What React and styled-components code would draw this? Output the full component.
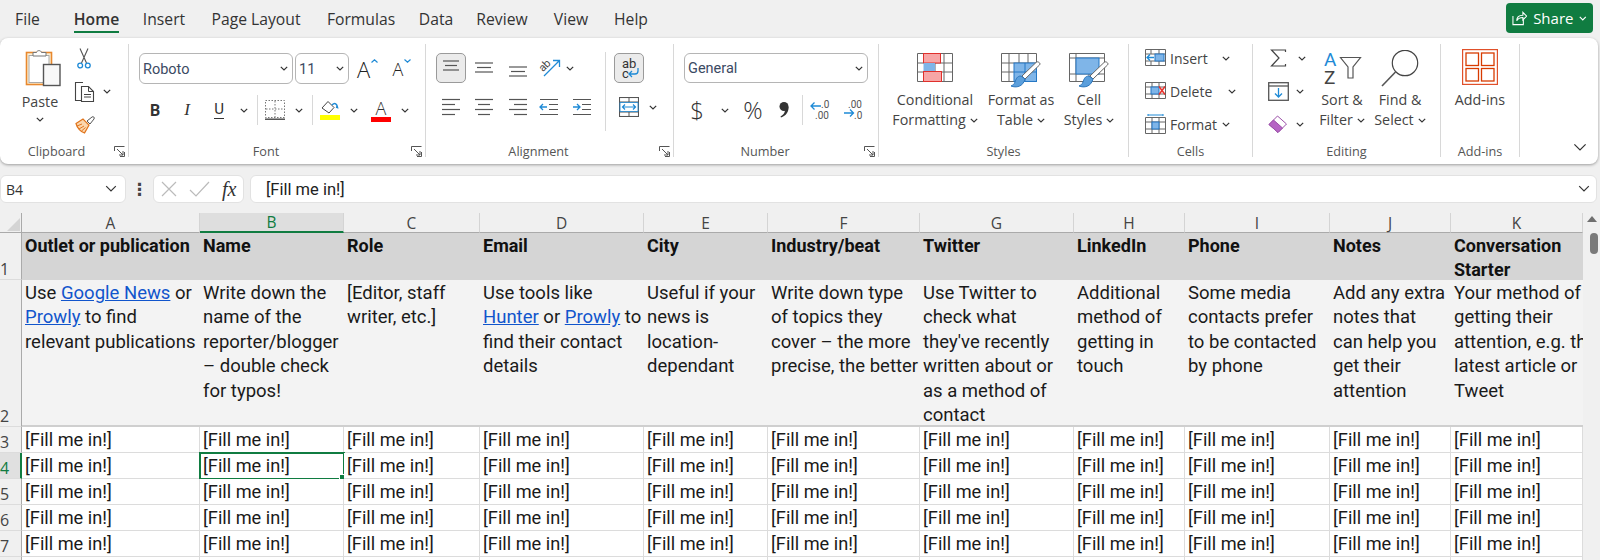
import React from 'react'
import styled, { createGlobalStyle } from 'styled-components'

const GlobalStyle = createGlobalStyle`
  html, body { margin: 0; padding: 0; background: #f0f0f0; overflow: hidden; }
  #root { width: 1600px; height: 560px; overflow: hidden; }
`

const UI = '"Open Sans", "Noto Sans", sans-serif'
const GREEN = '#107c41'
const INK = '#444'
const BLUE = '#1e8ad6'

const Link = styled.span`
  color: #1155cc;
  text-decoration: underline;
`

function Chev({ w = 8, color = '#333', sw = 1.2 }) {
  return (
    <svg width={w} height={w * 0.625} viewBox="0 0 8 5" fill="none">
      <path d="M.8.8 4 4 7.2.8" stroke={color} strokeWidth={sw} />
    </svg>
  )
}

function Launcher() {
  return (
    <LauncherBox width="11" height="11" viewBox="0 0 11 11" fill="none" stroke="#555">
      <path d="M.5 5V.5h10M10.5 6v4.5H6" />
      <path d="M3 3l6 6M5 9h4V5" />
    </LauncherBox>
  )
}

function PasteIcon() {
  return (
    <svg width="36" height="39" viewBox="0 0 36 39" fill="none">
      <rect x="1.5" y="4.5" width="25" height="32" fill="#fdf1d6" stroke="#e8882e" strokeWidth="1.6" />
      <rect x="4" y="7.5" width="20" height="27" fill="#fff" stroke="#aaa" />
      <path d="M8 8V4.5h3.5C12 2 16 2 16.5 4.5H21V8z" fill="#fff" stroke="#777" />
      <rect x="18.5" y="16.5" width="16.5" height="21" fill="#f8f8f8" stroke="#555" strokeWidth="1.4" />
    </svg>
  )
}

function CutIcon() {
  return (
    <svg width="14" height="21" viewBox="0 0 14 21" fill="none">
      <path d="M3 .5 9.5 15M11 .5 4.5 15" stroke="#555" strokeWidth="1.1" />
      <circle cx="3.2" cy="17.5" r="2.4" stroke={BLUE} strokeWidth="1.3" />
      <circle cx="10.8" cy="17.5" r="2.4" stroke={BLUE} strokeWidth="1.3" />
    </svg>
  )
}

function CopyIcon() {
  return (
    <svg width="21" height="21" viewBox="0 0 21 21" fill="none" stroke="#444">
      <path d="M8 19.5H1.5V1.5H9" strokeWidth="1.1" />
      <path d="M7.5 5.5h7l5 5v10h-12z" fill="#fff" strokeWidth="1.1" />
      <path d="M14.5 5.5v5h5M10 13.5h7M10 16h7" />
    </svg>
  )
}

function PainterIcon() {
  return (
    <svg width="21" height="20" viewBox="0 0 21 20" fill="none">
      <path d="M13 7l3 3 4-5c1-1.5-.8-3-2-2z" fill="#fff" stroke="#555" />
      <path d="M2 9.5 9 5l6 6-4.5 8C7 18 3 14 2 9.5z" fill="#fbd6ad" stroke="#e0741c" strokeWidth="1.2" />
      <path d="M3 12l5-2M5 15l5-3M7.5 17l4-3.5" stroke="#e0741c" />
    </svg>
  )
}

function BorderIcon() {
  return (
    <svg width="20" height="20" viewBox="0 0 20 20" fill="none" stroke="#777" strokeDasharray="1.5 1.5">
      <rect x=".5" y=".5" width="19" height="17" />
      <path d="M10 1v16M1 9h18" />
      <path d="M0 19.2h20" stroke="#444" strokeWidth="1.4" strokeDasharray="none" />
    </svg>
  )
}

function FillIcon() {
  return (
    <svg width="20" height="20" viewBox="0 0 20 20" fill="none">
      <path d="M2 8 8 1.5l6 6-5 5.5z" fill="#fff" stroke="#444" />
      <path d="M12 5c3-3 5-1 5.5 2.5L16 7" stroke={BLUE} strokeWidth="1.6" />
      <rect y="15" width="20" height="5" fill="#ffff00" />
    </svg>
  )
}

function FontColorIcon() {
  return (
    <ColorWrap>
      <ColorA>A</ColorA>
      <ColorBar />
    </ColorWrap>
  )
}

function AlignLines({ rows }) {
  return (
    <svg width="20" height="20" viewBox="0 0 20 20" fill="none" stroke="#555" strokeWidth="1.2">
      {rows.map((r, i) => (
        <path key={i} d={`M${r[0]} ${r[2]}H${r[1]}`} />
      ))}
    </svg>
  )
}

const TOP_ROWS = [[2, 18, 3], [4, 16, 7.5], [2, 18, 12]]
const MID_ROWS = [[1, 19, 5], [3, 17, 9.5], [1, 19, 14]]
const BOT_ROWS = [[1, 19, 9], [3, 17, 13.5], [1, 19, 18]]
const LEFT_ROWS = [[1, 19, 2.5], [1, 14, 7.5], [1, 19, 12.5], [1, 14, 17.5]]
const CENTER_ROWS = [[1, 19, 2.5], [4, 16, 7.5], [1, 19, 12.5], [4, 16, 17.5]]
const RIGHT_ROWS = [[1, 19, 2.5], [6, 19, 7.5], [1, 19, 12.5], [6, 19, 17.5]]

function OrientIcon() {
  return (
    <svg width="22" height="20" viewBox="0 0 22 20" fill="none" overflow="visible">
      <text x="0" y="11" fontFamily="Roboto" fontSize="11" fill="#444" transform="rotate(-45 6 8)">ab</text>
      <path d="M5 18 20 3M14 2.5h6.5V9" stroke={BLUE} strokeWidth="1.3" />
    </svg>
  )
}

function IndentIcon({ flip }) {
  return (
    <svg width="20" height="20" viewBox="0 0 20 20" fill="none">
      <path d="M1 2.5h18M10 7.5h9M10 12.5h9M1 17.5h18" stroke="#555" strokeWidth="1.2" />
      {flip
        ? <path d="M1 10h7M5 7l3 3-3 3" stroke={BLUE} strokeWidth="1.3" />
        : <path d="M8 10H1M4 7l-3 3 3 3" stroke={BLUE} strokeWidth="1.3" />}
    </svg>
  )
}

function WrapIcon() {
  return (
    <svg width="22" height="24" viewBox="0 0 22 24" fill="none">
      <text x="4" y="12" fontFamily="Roboto" fontSize="13" fill="#333">ab</text>
      <text x="4" y="22" fontFamily="Roboto" fontSize="13" fill="#333">c</text>
      <path d="M20 12v3c0 2-1 3-3 3h-6M14 15l-3 3 3 3" stroke={BLUE} strokeWidth="1.3" />
    </svg>
  )
}

function MergeIcon() {
  return (
    <svg width="20" height="20" viewBox="0 0 20 20" fill="none" stroke="#555">
      <rect x=".5" y=".5" width="19" height="19" strokeWidth="1.1" />
      <path d="M10 1v4M10 15v4M1 5h18M1 15h18" />
      <path d="M3 10h14M6 7.5 3.5 10 6 12.5M14 7.5l2.5 2.5-2.5 2.5" stroke={BLUE} strokeWidth="1.2" />
      <path d="M1 5.5h18v9H1z" stroke={BLUE} strokeWidth=".8" />
    </svg>
  )
}

function DecimalIcon({ more }) {
  return (
    <svg width="21" height="22" viewBox="0 0 21 22" fill="none">
      {more ? (
        <>
          <text x="5" y="9" fontFamily="Roboto" fontSize="10" fill="#555">.00</text>
          <text x="11" y="20" fontFamily="Roboto" fontSize="10" fill="#555">.0</text>
          <path d="M10 14H1M7 10.5l3.5 3.5L7 17.5" stroke={BLUE} strokeWidth="1.3" />
        </>
      ) : (
        <>
          <text x="11" y="9" fontFamily="Roboto" fontSize="10" fill="#555">.0</text>
          <text x="5" y="20" fontFamily="Roboto" fontSize="10" fill="#555">.00</text>
          <path d="M1 7h10M4.5 3.5 1 7l3.5 3.5" stroke={BLUE} strokeWidth="1.3" />
        </>
      )}
    </svg>
  )
}

function CommaStyleIcon() {
  return (
    <svg width="11" height="16" viewBox="0 0 11 16" fill="#333">
      <circle cx="5" cy="4.5" r="4.5" />
      <path d="M9.5 4.5c.6 5-2.5 9.5-7.5 11l-.5-1c2.500-1.300 4.300-3.500 4.500-6z" />
    </svg>
  )
}

function SheetGrid() {
  return (
    <path
      d="M.5.5h35v28H.5zM.5 10h35M.5 19h35M8 .5v28M18 .5v28M27 .5v28"
      stroke="#666"
      strokeWidth="1"
      fill="#fff"
    />
  )
}

function ConditionalIcon() {
  return (
    <svg width="36" height="29" viewBox="0 0 36 29" fill="none">
      <SheetGrid />
      <rect x="6.5" y=".5" width="17" height="9.5" fill="#f7a6a6" stroke="#e0302c" />
      <rect x="6.5" y="10" width="11.5" height="8.5" fill="#7fb5e8" />
      <rect x="6.5" y="18.5" width="18" height="10" fill="#f7a6a6" stroke="#e0302c" />
    </svg>
  )
}

function Brush() {
  return (
    <>
      <path d="M38 9.5c-1-1-2-.8-3 0L21 23l3 3L38.5 12c.8-1 .5-2-.5-2.5z" fill="#fff" stroke="#666" />
      <path d="M20 23c-4 0-5 3-6 6-.5 2-2 3-4 4 5 2 12 1 14-7z" fill="#5b9fdc" stroke="#2f78bd" />
    </>
  )
}

function FormatTableIcon() {
  return (
    <svg width="40" height="35" viewBox="0 0 40 35" fill="none">
      <SheetGrid />
      <rect x="13" y="10" width="22.5" height="18.5" fill="#7fb5e8" stroke="#2577c4" />
      <path d="M13 19h22.5M24 10v18.5" stroke="#2577c4" />
      <Brush />
    </svg>
  )
}

function CellStylesIcon() {
  return (
    <svg width="40" height="35" viewBox="0 0 40 35" fill="none">
      <path d="M.5.5h35v28H.5zM.5 5h35M7 .5v28M.5 21h35M20 21v7.5" stroke="#666" fill="#fff" />
      <rect x="7" y="5" width="23" height="16" fill="#7fb5e8" stroke="#2577c4" />
      <Brush />
    </svg>
  )
}

function InsertCellsIcon() {
  return (
    <svg width="21" height="18" viewBox="0 0 21 18" fill="none">
      <path d="M.5.5h20v16H.5zM.5 5h20M.5 12h20M6 .5V5M6 12v5M14 .5v16" stroke="#666" />
      <rect x="10" y="5" width="9" height="7" fill="#7fb5e8" stroke="#2577c4" />
      <path d="M9 8.5H2M5 5.5 2 8.5l3 3" stroke={BLUE} strokeWidth="1.3" />
    </svg>
  )
}

function DeleteCellsIcon() {
  return (
    <svg width="21" height="18" viewBox="0 0 21 18" fill="none">
      <path d="M.5.5h20v16H.5zM.5 5h20M.5 12h20M7 .5v16M14 .5V5M14 12v5" stroke="#666" />
      <rect x="6" y="5" width="8" height="7" fill="#7fb5e8" stroke="#2577c4" />
      <path d="M14 4.5l6 8M20 4.5l-6 8" stroke="#e8322c" strokeWidth="1.5" />
    </svg>
  )
}

function FormatCellsIcon() {
  return (
    <svg width="21" height="20" viewBox="0 0 21 20" fill="none">
      <path d="M.5 3.5h20v16H.5zM.5 8h20M.5 15h20M7 3.5v16M14 3.5v16" stroke="#666" />
      <rect x="7" y="8" width="7" height="7" fill="#7fb5e8" stroke="#2577c4" />
      <path d="M3 1h15M3 0v2M18 0v2" stroke={BLUE} strokeWidth="1" />
    </svg>
  )
}

function SumIcon() {
  return (
    <svg width="17" height="18" viewBox="0 0 17 18" fill="none">
      <path d="M15.5 3V1H1.5L9 9l-7.5 8h14v-2" stroke="#444" strokeWidth="1.2" />
    </svg>
  )
}

function FillDownIcon() {
  return (
    <svg width="21" height="19" viewBox="0 0 21 19" fill="none">
      <rect x=".7" y=".7" width="19.6" height="17.6" stroke="#555" strokeWidth="1.3" />
      <path d="M.7 4h19.6" stroke="#555" strokeWidth="1.3" />
      <path d="M10.5 6v9M7 11.5l3.5 3.5 3.5-3.5" stroke={BLUE} strokeWidth="1.3" />
    </svg>
  )
}

function ClearIcon() {
  return (
    <svg width="20" height="20" viewBox="0 0 20 20" fill="none">
      <path d="M1 10.5 9.5 2l9 8-8.5 8.5z" fill="#fff" stroke="#9b4fa8" />
      <path d="M1 10.5 5.5 6l9 8L10 18.5z" fill="#b565c4" stroke="#9b4fa8" />
    </svg>
  )
}

function SortIcon() {
  return (
    <svg width="42" height="35" viewBox="0 0 42 35" fill="none" overflow="visible">
      <text x="3" y="16" fontFamily="Roboto" fontSize="19" fill={BLUE}>A</text>
      <text x="3" y="33.5" fontFamily="Roboto" fontSize="19" fill="#444">Z</text>
      <path d="M19.5 7.5h20l-7.5 9.5V28h-5V17z" fill="#fff" stroke="#555" strokeWidth="1.2" />
    </svg>
  )
}

function FindIcon() {
  return (
    <svg width="38" height="37" viewBox="0 0 38 37" fill="none">
      <circle cx="24" cy="13" r="12.7" fill="#fff" stroke="#444" strokeWidth="1.2" />
      <path d="M14.5 22 1 36" stroke="#555" strokeWidth="1.6" />
    </svg>
  )
}

function AddInsIcon() {
  return (
    <svg width="36" height="36" viewBox="0 0 36 36" fill="none">
      <rect x=".6" y=".6" width="34.8" height="34.8" stroke="#e0502a" strokeWidth="1.2" />
      <rect x="4" y="4" width="12.5" height="12.5" stroke="#d83b01" strokeWidth="1.3" />
      <rect x="19.5" y="4" width="12.5" height="12.5" stroke="#d83b01" strokeWidth="1.3" />
      <rect x="4" y="19.5" width="12.5" height="12.5" stroke="#d83b01" strokeWidth="1.3" />
      <rect x="19.5" y="19.5" width="12.5" height="12.5" stroke="#d83b01" strokeWidth="1.3" />
    </svg>
  )
}

function ShareIcon() {
  return (
    <svg width="16" height="16" viewBox="0 0 16 16" fill="none" stroke="#fff" strokeWidth="1.1">
      <path d="M1 6v9h11V9.5" />
      <path d="M5 11c0-4 2.5-6 6.5-6V2L15.5 6l-4 4V7.5C8 7.5 6 9 5 11z" />
    </svg>
  )
}

function SizeCaret({ up }) {
  return (
    <svg width="7" height="4" viewBox="0 0 7 4" fill="none" stroke={BLUE} strokeWidth="1.2">
      <path d={up ? 'M.5 3.5 3.5.8l3 2.7' : 'M.5.5l3 2.7 3-2.7'} />
    </svg>
  )
}

const TABS = ['File', 'Home', 'Insert', 'Page Layout', 'Formulas', 'Data', 'Review', 'View', 'Help']
const TAB_WIDTHS = [55, 83, 52, 132, 78, 72, 60, 78, 42]

const COLS = [
  { id: 'A', w: 178 }, { id: 'B', w: 144 }, { id: 'C', w: 136 }, { id: 'D', w: 164 },
  { id: 'E', w: 124 }, { id: 'F', w: 152 }, { id: 'G', w: 154 }, { id: 'H', w: 111 },
  { id: 'I', w: 145 }, { id: 'J', w: 121 }, { id: 'K', w: 132 },
]

const HEADERS = [
  ['Outlet or publication'], ['Name'], ['Role'], ['Email'], ['City'], ['Industry/beat'],
  ['Twitter'], ['LinkedIn'], ['Phone'], ['Notes'], ['Conversation', 'Starter'],
]

const DESCRIPTIONS = [
  [<>Use <Link>Google News</Link> or</>, <><Link>Prowly</Link> to find</>, 'relevant publications'],
  ['Write down the', 'name of the', 'reporter/blogger', '– double check', 'for typos!'],
  ['[Editor, staff', 'writer, etc.]'],
  ['Use tools like', <><Link>Hunter</Link> or <Link>Prowly</Link> to</>, 'find their contact', 'details'],
  ['Useful if your', 'news is', 'location-', 'dependant'],
  ['Write down type', 'of topics they', 'cover – the more', 'precise, the better'],
  ['Use Twitter to', 'check what', "they've recently", 'written about or', 'as a method of', 'contact'],
  ['Additional', 'method of', 'getting in', 'touch'],
  ['Some media', 'contacts prefer', 'to be contacted', 'by phone'],
  ['Add any extra', 'notes that', 'can help you', 'get their', 'attention'],
  ['Your method of', 'getting their', 'attention, e.g. the', 'latest article or', 'Tweet'],
]

const FILL_ROWS = [3, 4, 5, 6, 7]

function Lines({ lines }) {
  return lines.map((line, i) => <Line key={i}>{line}</Line>)
}

export default function App() {
  return (
    <Page>
      <GlobalStyle />
      <TabBar>
        {TABS.map((t, i) => (
          <Tab key={t} $w={TAB_WIDTHS[i]} $active={t === 'Home'}><span>{t}</span></Tab>
        ))}
        <ShareButton><ShareIcon />Share<Chev color="#fff" /></ShareButton>
      </TabBar>

      <Ribbon>
        <Group $w={129}>
          <GroupBody>
            <PasteTool>
              <PasteGlyph><PasteIcon /></PasteGlyph>
              <PasteLabel>Paste</PasteLabel>
              <Chev />
            </PasteTool>
            <Stack>
              <StackRow><Slot $w={28}><CutIcon /></Slot></StackRow>
              <StackRow><Slot $w={28}><CopyIcon /></Slot><Slot $w={18}><Chev /></Slot></StackRow>
              <StackRow><Slot $w={28}><PainterIcon /></Slot></StackRow>
            </Stack>
          </GroupBody>
          <GroupFoot><GroupLabel $shift={7}>Clipboard</GroupLabel><Launcher /></GroupFoot>
        </Group>

        <Group $w={297}>
          <GroupColumn $pad={10}>
            <ToolRow>
              <Select $w={154}>
                <SelectText>Roboto</SelectText><Chev />
              </Select>
              <Select $w={54} $gap={2}>
                <SelectText>11</SelectText><Chev />
              </Select>
              <Slot $w={37}><GrowA $size={22}>A<SizeCaret up /></GrowA></Slot>
              <Slot $w={32}><GrowA $size={18}>A<SizeCaret /></GrowA></Slot>
            </ToolRow>
            <ToolRow $top={11}>
              <Slot $w={32}><Bold>B</Bold></Slot>
              <Slot $w={32}><Italic>I</Italic></Slot>
              <Slot $w={32}><Under>U</Under></Slot>
              <Slot $w={18}><Chev /></Slot>
              <ToolSep $left={4} />
              <Slot $w={34}><BorderIcon /></Slot>
              <Slot $w={14}><Chev /></Slot>
              <ToolSep $left={6} />
              <Slot $w={34}><FillIcon /></Slot>
              <Slot $w={14}><Chev /></Slot>
              <Slot $w={40}><FontColorIcon /></Slot>
              <Slot $w={8}><Chev /></Slot>
            </ToolRow>
          </GroupColumn>
          <GroupFoot><GroupLabel>Font</GroupLabel><Launcher /></GroupFoot>
        </Group>

        <Group $w={248}>
          <GroupBody>
            <GroupColumn $pad={10} $w={179}>
              <ToolRow>
                <ToggleButton><AlignLines rows={TOP_ROWS} /></ToggleButton>
                <Slot $w={35} $h={30}><AlignLines rows={MID_ROWS} /></Slot>
                <Slot $w={33} $h={30}><AlignLines rows={BOT_ROWS} /></Slot>
                <Slot $w={32} $h={30}><OrientIcon /></Slot>
                <Slot $w={8} $h={30}><Chev /></Slot>
              </ToolRow>
              <ToolRow $top={12}>
                <Slot $w={30}><AlignLines rows={LEFT_ROWS} /></Slot>
                <Slot $w={35}><AlignLines rows={CENTER_ROWS} /></Slot>
                <Slot $w={33}><AlignLines rows={RIGHT_ROWS} /></Slot>
                <Slot $w={30}><IndentIcon /></Slot>
                <Slot $w={36}><IndentIcon flip /></Slot>
              </ToolRow>
            </GroupColumn>
            <WrapSep />
            <GroupColumn $pad={8}>
              <ToolRow><ToggleButton><WrapIcon /></ToggleButton></ToolRow>
              <ToolRow $top={12}>
                <Slot $w={30}><MergeIcon /></Slot>
                <Slot $w={18}><Chev /></Slot>
              </ToolRow>
            </GroupColumn>
          </GroupBody>
          <GroupFoot><GroupLabel>Alignment</GroupLabel><Launcher /></GroupFoot>
        </Group>

        <Group $w={205}>
          <GroupColumn $pad={10}>
            <ToolRow>
              <Select $w={184} $h={30}>
                <SelectText>General</SelectText><Chev />
              </Select>
            </ToolRow>
            <ToolRow $top={12}>
              <Slot $w={26}><NumberGlyph $size={24}>$</NumberGlyph></Slot>
              <Slot $w={30}><Chev /></Slot>
              <Slot $w={26}><NumberGlyph $size={24}>%</NumberGlyph></Slot>
              <Slot $w={36}><CommaStyleIcon /></Slot>
              <ToolSep />
              <Slot $w={34}><DecimalIcon /></Slot>
              <Slot $w={32}><DecimalIcon more /></Slot>
            </ToolRow>
          </GroupColumn>
          <GroupFoot><GroupLabel>Number</GroupLabel><Launcher /></GroupFoot>
        </Group>

        <Group $w={250}>
          <GroupBody>
            <BigTool $w={112}>
              <BigIcon $top={9}><ConditionalIcon /></BigIcon>
              <BigLabel>Conditional</BigLabel>
              <BigLabel>Formatting <Chev /></BigLabel>
            </BigTool>
            <BigTool $w={60}>
              <BigIcon $top={9}><FormatTableIcon /></BigIcon>
              <BigLabel>Format as</BigLabel>
              <BigLabel>Table <Chev /></BigLabel>
            </BigTool>
            <BigTool $w={76}>
              <BigIcon $top={9}><CellStylesIcon /></BigIcon>
              <BigLabel>Cell</BigLabel>
              <BigLabel>Styles <Chev /></BigLabel>
            </BigTool>
          </GroupBody>
          <GroupFoot><GroupLabel>Styles</GroupLabel></GroupFoot>
        </Group>

        <Group $w={124}>
          <GroupBody>
            <Stack $pad={15}>
              <StackRow>
                <Slot $w={22}><InsertCellsIcon /></Slot>
                <CellAction $w={54}>Insert</CellAction>
                <Slot $w={12}><Chev /></Slot>
              </StackRow>
              <StackRow>
                <Slot $w={22}><DeleteCellsIcon /></Slot>
                <CellAction $w={60}>Delete</CellAction>
                <Slot $w={12}><Chev /></Slot>
              </StackRow>
              <StackRow>
                <Slot $w={22}><FormatCellsIcon /></Slot>
                <CellAction $w={54}>Format</CellAction>
                <Slot $w={12}><Chev /></Slot>
              </StackRow>
            </Stack>
          </GroupBody>
          <GroupFoot><GroupLabel>Cells</GroupLabel></GroupFoot>
        </Group>

        <Group $w={188}>
          <GroupBody>
            <Stack $pad={13}>
              <StackRow><Slot $w={24}><SumIcon /></Slot><Slot $w={24}><Chev /></Slot></StackRow>
              <StackRow><Slot $w={24}><FillDownIcon /></Slot><Slot $w={20}><Chev /></Slot></StackRow>
              <StackRow><Slot $w={24}><ClearIcon /></Slot><Slot $w={20}><Chev /></Slot></StackRow>
            </Stack>
            <BigTool $w={56}>
              <BigIcon $top={6}><SortIcon /></BigIcon>
              <BigLabel>Sort &amp;</BigLabel>
              <BigLabel>Filter <Chev /></BigLabel>
            </BigTool>
            <BigTool $w={60}>
              <BigIcon $top={6}><FindIcon /></BigIcon>
              <BigLabel>Find &amp;</BigLabel>
              <BigLabel>Select <Chev /></BigLabel>
            </BigTool>
          </GroupBody>
          <GroupFoot><GroupLabel>Editing</GroupLabel></GroupFoot>
        </Group>

        <Group $w={79}>
          <GroupBody>
            <BigTool $w={78}>
              <BigIcon $top={5}><AddInsIcon /></BigIcon>
              <BigLabel>Add-ins</BigLabel>
            </BigTool>
          </GroupBody>
          <GroupFoot><GroupLabel>Add-ins</GroupLabel></GroupFoot>
        </Group>

        <CollapseArea><Chev w={14} color="#333" sw={0.7} /></CollapseArea>
      </Ribbon>

      <FormulaBar>
        <NameBox>B4<Chev w={12} sw={0.8} /></NameBox>
        <Dots>⋮</Dots>
        <FxBox>
          <svg width="16" height="16" viewBox="0 0 16 16" fill="none" stroke="#bbb" strokeWidth="1.2">
            <path d="M1 1l14 14M15 1 1 15" />
          </svg>
          <svg width="21" height="16" viewBox="0 0 21 16" fill="none" stroke="#bbb" strokeWidth="1.2">
            <path d="M1 9l6 6L20 1" />
          </svg>
          <FxText>fx</FxText>
        </FxBox>
        <FormulaInput><span>[Fill me in!]</span><Chev w={12} color="#333" sw={0.8} /></FormulaInput>
      </FormulaBar>

      <SheetArea>
        <Grid>
          <Corner><CornerMark /></Corner>
          {COLS.map((c) => (
            <ColHead key={c.id} $active={c.id === 'B'}>{c.id}</ColHead>
          ))}

          <RowHead>1</RowHead>
          {HEADERS.map((h, i) => <HeaderCell key={i}><Lines lines={h} /></HeaderCell>)}

          <RowHead>2</RowHead>
          {DESCRIPTIONS.map((d, i) => <DescCell key={i}><Lines lines={d} /></DescCell>)}

          {FILL_ROWS.map((n) => (
            <React.Fragment key={n}>
              <RowHead $active={n === 4}>{n}</RowHead>
              {COLS.map((c) => (
                <DataCell key={c.id} $selected={n === 4 && c.id === 'B'}>
                  [Fill me in!]
                  {n === 4 && c.id === 'B' && <FillHandle />}
                </DataCell>
              ))}
            </React.Fragment>
          ))}

          <RowHead />
          {COLS.map((c) => <DataCell key={c.id} />)}
        </Grid>
        <ScrollRail>
          <ScrollUp />
          <ScrollThumb />
        </ScrollRail>
      </SheetArea>
    </Page>
  )
}

const Page = styled.div`
  width: 1600px;
  height: 560px;
  overflow: hidden;
  background: #f0f0f0;
  font-family: ${UI};
  color: ${INK};
`

const TabBar = styled.div`
  height: 38px;
  display: flex;
  align-items: flex-start;
  box-sizing: border-box;
  padding-right: 7px;
`

const Tab = styled.div`
  width: ${(p) => p.$w}px;
  flex: none;
  height: 34px;
  display: flex;
  justify-content: center;
  font-size: 15.7px;
  line-height: 39px;
  color: #333;
  span {
    display: block;
    height: 31px;
    border-bottom: ${(p) => (p.$active ? `2px solid ${GREEN}` : 'none')};
    font-weight: ${(p) => (p.$active ? 600 : 400)};
  }
`

const ShareButton = styled.div`
  margin: 3px 0 0 auto;
  width: 87px;
  height: 30px;
  box-sizing: border-box;
  padding: 0 6px;
  display: flex;
  align-items: center;
  gap: 6px;
  border-radius: 4px;
  background: ${GREEN};
  color: #fff;
  font-size: 15px;
  font-weight: 500;
`

const Ribbon = styled.div`
  height: 126px;
  width: 1598px;
  box-sizing: border-box;
  padding-top: 6px;
  display: flex;
  align-items: flex-start;
  background: #fff;
  border-radius: 8px;
  box-shadow: 0 1px 3px rgba(0, 0, 0, 0.35);
`

const Group = styled.div`
  width: ${(p) => p.$w}px;
  height: 113px;
  box-sizing: border-box;
  flex: none;
  display: flex;
  flex-direction: column;
  border-right: 1px solid #d8d8d8;
`

const GroupBody = styled.div`
  flex: 1;
  min-height: 0;
  display: flex;
  align-items: flex-start;
`

const GroupColumn = styled.div`
  flex: ${(p) => (p.$w ? 'none' : 1)};
  width: ${(p) => (p.$w ? `${p.$w}px` : 'auto')};
  box-sizing: border-box;
  min-height: 0;
  padding: 9px 0 0 ${(p) => p.$pad || 0}px;
`

const GroupFoot = styled.div`
  height: 16px;
  flex: none;
  margin-bottom: -4px;
  padding-bottom: 4px;
  transform: translateY(2px);
  display: flex;
  align-items: center;
`

const GroupLabel = styled.div`
  flex: 1;
  box-sizing: border-box;
  padding-left: ${(p) => p.$shift || 0}px;
  text-align: center;
  font-size: 12.7px;
  line-height: 16px;
  color: #555;
`

const LauncherBox = styled.svg`
  flex: none;
  margin: 0 3px 0 8px;
`

const Stack = styled.div`
  flex: none;
  display: flex;
  flex-direction: column;
  gap: 5px;
  padding-left: ${(p) => p.$pad || 0}px;
`

const StackRow = styled.div`
  height: 28px;
  display: flex;
  align-items: center;
`

const ToolRow = styled.div`
  display: flex;
  align-items: center;
  margin-top: ${(p) => p.$top || 0}px;
`

const Slot = styled.div`
  width: ${(p) => p.$w}px;
  height: ${(p) => p.$h || 24}px;
  flex: none;
  display: flex;
  align-items: center;
  justify-content: center;
`

const PasteTool = styled.div`
  width: 70px;
  flex: none;
  box-sizing: border-box;
  padding: 4px 0 0 10px;
  display: flex;
  flex-direction: column;
  align-items: center;
`

const PasteGlyph = styled.div`
  height: 39px;
  margin-left: 6px;
`

const PasteLabel = styled.div`
  margin: 6px 0 6px;
  font-size: 14.3px;
  line-height: 18px;
`

const Select = styled.div`
  width: ${(p) => p.$w}px;
  height: ${(p) => p.$h || 31}px;
  margin-left: ${(p) => p.$gap || 0}px;
  box-sizing: border-box;
  flex: none;
  padding: 0 4px 0 3px;
  display: flex;
  align-items: center;
  justify-content: space-between;
  border: 1px solid #b5b5b5;
  border-radius: 6px;
`

const SelectText = styled.span`
  padding-top: 2px;
  font-family: Roboto, sans-serif;
  font-size: 14.5px;
  line-height: 26px;
  color: #3b4a63;
`

const GrowA = styled.span`
  display: flex;
  align-items: flex-start;
  gap: 1px;
  font-size: ${(p) => p.$size}px;
  font-weight: 300;
  line-height: 26px;
  color: #222;
  svg {
    margin-top: 3px;
  }
`

const Bold = styled.span`
  font-family: Roboto, sans-serif;
  font-size: 16px;
  font-weight: 700;
  color: #333;
`

const Italic = styled.span`
  font-family: "Liberation Serif", serif;
  font-size: 17px;
  font-style: italic;
  color: #333;
`

const Under = styled.span`
  font-family: Roboto, sans-serif;
  font-size: 15px;
  border-bottom: 1.5px solid #333;
  line-height: 17px;
  color: #333;
`

const ToolSep = styled.div`
  width: 1px;
  height: 30px;
  flex: none;
  margin-left: ${(p) => p.$left || 0}px;
  background: #d8d8d8;
`

const WrapSep = styled.div`
  width: 1px;
  height: 79px;
  flex: none;
  margin-top: 8px;
  background: #d8d8d8;
`

const ColorWrap = styled.div`
  width: 20px;
  display: flex;
  flex-direction: column;
  align-items: center;
`

const ColorA = styled.span`
  font-size: 18px;
  font-weight: 300;
  line-height: 18px;
  color: #333;
`

const ColorBar = styled.div`
  width: 20px;
  height: 5px;
  background: #ff0000;
`

const ToggleButton = styled.div`
  width: 30px;
  height: 30px;
  flex: none;
  box-sizing: border-box;
  display: flex;
  align-items: center;
  justify-content: center;
  background: #ebebeb;
  border: 1px solid #9a9a9a;
  border-radius: 5px;
`

const NumberGlyph = styled.span`
  font-size: ${(p) => p.$size}px;
  font-weight: 300;
  line-height: 26px;
  color: #333;
`

const BigTool = styled.div`
  width: ${(p) => p.$w}px;
  flex: none;
  display: flex;
  flex-direction: column;
  align-items: center;
`

const BigIcon = styled.div`
  height: 46px;
  box-sizing: border-box;
  padding-top: ${(p) => p.$top}px;
  display: flex;
  justify-content: center;
`

const BigLabel = styled.div`
  display: flex;
  align-items: center;
  gap: 4px;
  font-size: 14.3px;
  line-height: 20px;
  white-space: nowrap;
`

const CellAction = styled.div`
  width: ${(p) => p.$w}px;
  flex: none;
  box-sizing: border-box;
  padding-left: 4px;
  font-size: 14px;
`

const CollapseArea = styled.div`
  flex: 1;
  height: 108px;
  box-sizing: border-box;
  padding-right: 11px;
  display: flex;
  align-items: flex-end;
  justify-content: flex-end;
`

const FormulaBar = styled.div`
  height: 28px;
  margin: 11px 3px 10px 0;
  display: flex;
  align-items: stretch;
`

const FieldBox = styled.div`
  box-sizing: border-box;
  background: #fff;
  border: 1px solid #e2e2e2;
  border-radius: 6px;
  display: flex;
  align-items: center;
`

const NameBox = styled(FieldBox)`
  width: 126px;
  flex: none;
  padding: 0 8px 0 5px;
  justify-content: space-between;
  font-size: 14px;
  color: #333;
`

const Dots = styled.div`
  width: 27px;
  flex: none;
  text-align: center;
  font-family: "DejaVu Sans", sans-serif;
  font-size: 17px;
  font-weight: 700;
  line-height: 28px;
  color: #444;
`

const FxBox = styled(FieldBox)`
  width: 91px;
  flex: none;
  padding: 0 6px 0 7px;
  gap: 12px;
  justify-content: flex-start;
`

const FxText = styled.span`
  font-family: "Liberation Serif", serif;
  font-size: 20px;
  font-style: italic;
  color: #333;
`

const FormulaInput = styled(FieldBox)`
  flex: 1;
  margin-left: 6px;
  padding: 0 6px 0 15px;
  justify-content: space-between;
  font-family: Roboto, sans-serif;
  font-size: 16.5px;
  color: #222;
`

const SheetArea = styled.div`
  display: flex;
  align-items: flex-start;
`

const Grid = styled.div`
  width: 1583px;
  flex: none;
  display: grid;
  grid-template-columns: 22px ${COLS.map((c) => `${c.w}px`).join(' ')};
  grid-template-rows: 20px 47px 147px repeat(5, 26px) 26px;
  font-family: Roboto, sans-serif;
  font-size: 18.2px;
  color: #1a1a1a;
`

const Corner = styled.div`
  box-sizing: border-box;
  border-right: 1px solid #aaa;
  border-bottom: 1px solid #aaa;
  display: flex;
  align-items: flex-end;
  justify-content: flex-end;
  padding: 0 1px 1px 0;
`

const CornerMark = styled.div`
  width: 0;
  height: 0;
  border-style: solid;
  border-width: 0 0 13px 13px;
  border-color: transparent transparent #d4d4d4 transparent;
`

const ColHead = styled.div`
  box-sizing: border-box;
  display: flex;
  align-items: flex-end;
  justify-content: center;
  font-family: ${UI};
  font-size: 15.5px;
  line-height: 18px;
  background: ${(p) => (p.$active ? '#dedede' : '#f0f0f0')};
  color: ${(p) => (p.$active ? GREEN : '#444')};
  border-right: 1px solid #d4d4d4;
  border-bottom: ${(p) => (p.$active ? `2px solid ${GREEN}` : '1px solid #aaa')};
`

const RowHead = styled.div`
  box-sizing: border-box;
  display: flex;
  align-items: flex-end;
  font-family: ${UI};
  font-size: 16px;
  line-height: 20px;
  background: ${(p) => (p.$active ? '#e0e0e0' : '#f0f0f0')};
  color: ${(p) => (p.$active ? GREEN : '#444')};
  border-right: ${(p) => (p.$active ? `2px solid ${GREEN}` : '1px solid #aaa')};
  border-bottom: 1px solid #dcdcdc;
`

const Line = styled.div`
  white-space: nowrap;
`

const HeaderCell = styled.div`
  box-sizing: border-box;
  overflow: hidden;
  padding: 1px 0 0 3px;
  background: #d5d5d5;
  font-size: 18px;
  font-weight: 700;
  line-height: 24px;
  color: #111;
`

const DescCell = styled.div`
  box-sizing: border-box;
  overflow: hidden;
  padding: 1px 0 0 3px;
  background: #f3f3f3;
  border-bottom: 2px solid #cfcfcf;
  font-size: 18.5px;
  line-height: 24.4px;
`

const DataCell = styled.div`
  position: relative;
  box-sizing: border-box;
  padding-left: 3px;
  background: #fff;
  line-height: 25px;
  border-right: 1px solid #dcdcdc;
  border-bottom: 1px solid #dcdcdc;
  outline: ${(p) => (p.$selected ? `2px solid ${GREEN}` : 'none')};
  outline-offset: -1px;
`

const FillHandle = styled.div`
  position: absolute;
  right: -3px;
  bottom: -3px;
  width: 5px;
  height: 5px;
  background: ${GREEN};
  border: 1px solid #fff;
`

const ScrollRail = styled.div`
  width: 17px;
  height: 347px;
  flex: none;
  display: flex;
  flex-direction: column;
  align-items: center;
  padding-top: 3px;
`

const ScrollUp = styled.div`
  width: 0;
  height: 0;
  border-style: solid;
  border-width: 0 5px 6px 5px;
  border-color: transparent transparent #6f6f6f transparent;
`

const ScrollThumb = styled.div`
  width: 8px;
  height: 21px;
  margin-top: 11px;
  margin-left: 5px;
  border-radius: 4px;
  background: #7a7a7a;
`
